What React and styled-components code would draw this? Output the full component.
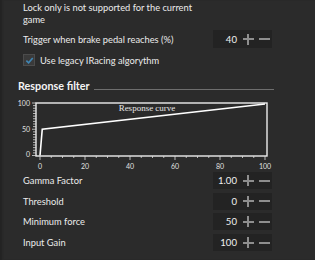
import React from "react";
import styled, { createGlobalStyle } from "styled-components";

const GlobalStyle = createGlobalStyle`
  html, body {
    margin: 0;
    padding: 0;
    background: #2b2b2b;
  }
  body {
    font-family: Lato, "Noto Sans", sans-serif;
    color: #ececec;
  }
`;

const Panel = styled.div`
  width: 315px;
  height: 260px;
  overflow: hidden;
  background: #2b2b2b;
  box-shadow: inset 3px 0 2px -1px #232323;
  padding-top: 2px;
  box-sizing: border-box;
`;

const Notice = styled.div`
  margin-left: 23px;
  max-width: 175px;
  font-size: 9.3px;
  line-height: 12px;
`;

const Row = styled.div`
  display: flex;
  align-items: center;
  justify-content: space-between;
  padding: 0 43px 0 23px;
  height: ${(p) => p.$h || 17}px;
  margin-top: ${(p) => p.$mt || 0}px;
  font-size: 9.3px;
`;

const Label = styled.span`
  white-space: nowrap;
`;

const NumberBox = styled.div`
  display: flex;
  align-items: center;
  width: 59px;
  height: 100%;
  background: #232323;
  box-sizing: border-box;
  padding-right: 2px;
`;

const Value = styled.span`
  flex: 1;
  text-align: right;
  padding-right: 5px;
  font-size: 9.6px;
  color: #f0f0f0;
`;

const StepButton = styled.span`
  position: relative;
  width: 12px;
  height: 12px;
  margin-left: ${(p) => (p.$plus ? 0 : 4)}px;
  &::before,
  &::after {
    content: "";
    position: absolute;
    background: #8e8e8e;
  }
  &::before {
    left: 0.5px;
    right: 0.5px;
    top: 5px;
    height: 2px;
  }
  &::after {
    display: ${(p) => (p.$plus ? "block" : "none")};
    top: 0.5px;
    bottom: 0.5px;
    left: 5px;
    width: 2px;
  }
`;

const CheckRow = styled.label`
  display: flex;
  align-items: center;
  gap: 5px;
  margin: 6px 0 0 23px;
  height: 12px;
  font-size: 9.3px;
`;

const CheckBox = styled.span`
  width: 10px;
  height: 10px;
  background: #3a3a3a;
  border: 1px solid #4c4c4c;
  display: flex;
  align-items: center;
  justify-content: center;
`;

const Header = styled.div`
  display: flex;
  align-items: center;
  height: 14px;
  margin: 12px 41px 0 18px;
  gap: 4px;
  font-size: 10.8px;
  font-weight: 700;
  color: #f4f4f4;
  &::after {
    content: "";
    flex: 1;
    height: 1px;
    background: #6e6e6e;
    margin-top: 8px;
  }
`;

const ChartBox = styled.div`
  margin: 5px 0 0 10px;
  height: 75px;
  svg {
    display: block;
  }
`;

const X0 = 30;
const Y0 = 58.5;
const sx = (v) => X0 + v * 2.25;
const sy = (v) => Y0 - v * 0.525;

function Chart() {
  const yticks = [];
  for (let v = 0; v <= 100; v += 5) {
    const major = v % 50 === 0;
    yticks.push(
      <line key={"y" + v} x1={major ? 22 : 23} x2={26} y1={sy(v)} y2={sy(v)} stroke="#dcdcdc" strokeWidth="0.8" />
    );
  }
  const xticks = [];
  for (let v = 0; v <= 100; v += 5) {
    const major = v % 20 === 0;
    xticks.push(
      <line key={"x" + v} x1={sx(v)} x2={sx(v)} y1={59} y2={major ? 63 : 61} stroke="#dcdcdc" strokeWidth="0.8" />
    );
  }
  return (
    <svg width="270" height="75" viewBox="0 0 270 75">
      <rect x="26" y="6" width="231" height="53" fill="#2a2a2a" stroke="#ededed" strokeWidth="1.4" />
      {yticks}
      {xticks}
      <g fill="#e0e0e0" fontSize="7" fontFamily="Lato, sans-serif">
        <text x="20" y={sy(100) + 2.5} textAnchor="end">100</text>
        <text x="20" y={sy(50) + 2.5} textAnchor="end">50</text>
        <text x="20" y={sy(0) + 1.5} textAnchor="end">0</text>
        {[0, 20, 40, 60, 80, 100].map((v) => (
          <text key={v} x={sx(v)} y="72" textAnchor="middle">{v}</text>
        ))}
      </g>
      <text x="137" y="14" textAnchor="middle" fill="#e6e6e6" fontSize="9" fontFamily="'Liberation Serif', serif">
        Response curve
      </text>
      <polyline
        points={`${sx(0)},${sy(0)} ${sx(1)},${sy(50)} ${sx(100)},${sy(98)}`}
        fill="none"
        stroke="#ffffff"
        strokeWidth="1.6"
      />
    </svg>
  );
}

function Stepper({ value }) {
  return (
    <NumberBox>
      <Value>{value}</Value>
      <StepButton $plus />
      <StepButton />
    </NumberBox>
  );
}

const params = [
  { label: "Gamma Factor", value: "1.00" },
  { label: "Threshold", value: "0" },
  { label: "Minimum force", value: "50" },
  { label: "Input Gain", value: "100" },
];

export default function App() {
  return (
    <Panel>
      <GlobalStyle />
      <Notice>Lock only is not supported for the current game</Notice>
      <Row $h={18} $mt={4}>
        <Label>Trigger when brake pedal reaches (%)</Label>
        <Stepper value="40" />
      </Row>
      <CheckRow>
        <CheckBox>
          <svg width="9" height="9" viewBox="0 0 10 10">
            <path d="M1.5 5.2 L4 7.6 L8.6 2.2" fill="none" stroke="#3f86b5" strokeWidth="1.8" />
          </svg>
        </CheckBox>
        Use legacy IRacing algorythm
      </CheckRow>
      <Header>Response filter</Header>
      <ChartBox>
        <Chart />
      </ChartBox>
      {params.map((p, i) => (
        <Row key={p.label} $mt={i === 0 ? 0 : 3.7}>
          <Label>{p.label}</Label>
          <Stepper value={p.value} />
        </Row>
      ))}
    </Panel>
  );
}
